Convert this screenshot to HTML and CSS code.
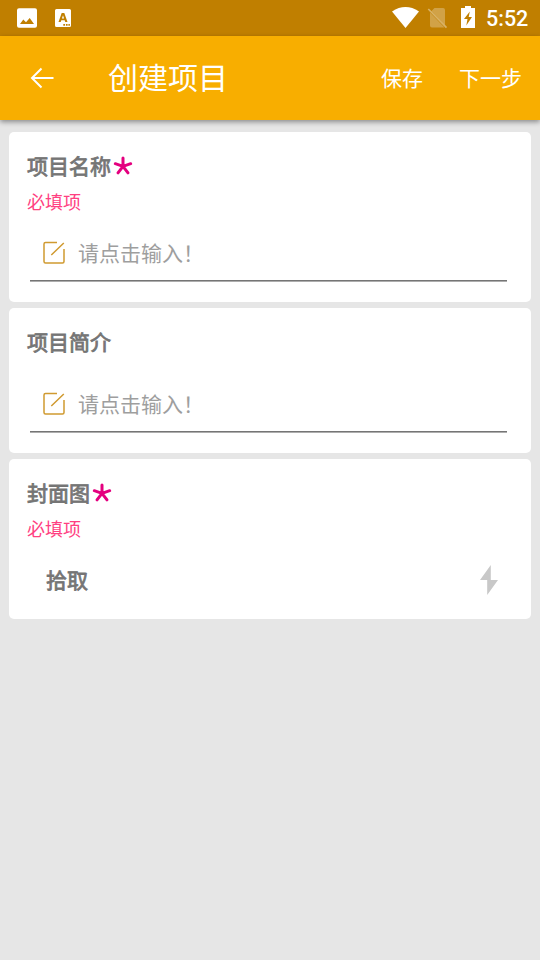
FILE: index.html
```html
<!DOCTYPE html>
<html lang="zh-CN">
<head>
<meta charset="utf-8">
<title>创建项目</title>
<link rel="stylesheet" href="styles.css">
</head>
<body>
<div class="status">
  <svg class="status-icons" width="120" height="36" viewBox="0 0 120 36">
    <path fill="#fff" fill-rule="evenodd" d="M19 8.300h16q2 0 2 2v15.400q0 2-2 2h-16q-2 0-2-2v-15.400q0-2 2-2zM20 24h14l-4.300-6-3.700 4.300-2.700-2.800z"/>
    <path fill="#fff" fill-rule="evenodd" d="M56.500 9h13q1.500 0 1.500 1.500v15q0 1.500-1.500 1.500h-13q-1.500 0-1.500-1.500v-15q0-1.500 1.500-1.500zM61.700 13l-3.200 9h2.200l.6-1.800h3.400l.6 1.800h2.200l-3.200-9zM63 15.200l1.100 3.400h-2.200zM63.300 24v1.700h1.700v-1.700zM65.900 24v1.700h1.700v-1.700zM68.400 24v1.700h1.500v-1.700z"/>
  </svg>
  <svg class="status-signals" width="96" height="36" viewBox="384 0 96 36">
    <path fill="#fff" d="M392 11.500Q405.500 2.700 419 11.500L405.500 28z"/>
    <path fill="#fff" fill-opacity=".28" d="M434.500 8H443q2 0 2 2v15L431.500 11zM430 12.500L444.500 27.500H432q-2 0-2-2z"/>
    <path stroke="#fff" stroke-opacity=".4" stroke-width="1.700" d="M428.300 9L446.500 27.600"/>
    <path fill="#fff" fill-rule="evenodd" d="M465 6h6v2h4v20h-14v-20h4zM469.800 11.500l-5.800 7.500h3.500l-1.200 6.500 5.700-8.500h-3.300z"/>
  </svg>
  <span class="clock">5:52</span>
</div>
<header class="toolbar">
  <svg class="back" width="24" height="22" viewBox="0 0 24 22"><path d="M11.500 1.500L2 11l9.500 9.500M1.500 11H23.500" fill="none" stroke="#fff" stroke-width="2"/></svg>
  <h1>创建项目</h1>
  <span class="action save">保存</span>
  <span class="action">下一步</span>
</header>
<main>
  <section class="card name-card">
    <h2>项目名称<svg class="star" width="20" height="20" viewBox="0 0 20 20"><path d="M10 10.300V2M10 10.300L2.300 7.700M10 10.300L17.700 7.700M10 10.300L5 16.800M10 10.300L15 16.800"/></svg></h2>
    <p class="required">必填项</p>
    <div class="field">
      <svg class="edit" width="24" height="24" viewBox="0 0 24 24"><path d="M15 1.600H3.500q-1.500 0-1.500 1.500V20.500q0 1.500 1.500 1.500H20.500q1.500 0 1.500-1.500V8M9.300 14L21.800 2"/></svg>
      <span>请点击输入！</span>
    </div>
  </section>
  <section class="card intro-card">
    <h2>项目简介</h2>
    <div class="field">
      <svg class="edit" width="24" height="24" viewBox="0 0 24 24"><path d="M15 1.600H3.500q-1.500 0-1.500 1.500V20.500q0 1.500 1.500 1.500H20.500q1.500 0 1.500-1.500V8M9.300 14L21.800 2"/></svg>
      <span>请点击输入！</span>
    </div>
  </section>
  <section class="card cover-card">
    <h2>封面图<svg class="star" width="20" height="20" viewBox="0 0 20 20"><path d="M10 10.300V2M10 10.300L2.300 7.700M10 10.300L17.700 7.700M10 10.300L5 16.800M10 10.300L15 16.800"/></svg></h2>
    <p class="required">必填项</p>
    <div class="pick">
      <span>拾取</span>
      <svg width="18" height="30" viewBox="0 0 18 30"><path fill="#c8c8c8" d="M10.800 0V15H18L7.200 30V15H0z"/></svg>
    </div>
  </section>
</main>
</body>
</html>
```
FILE: styles.css
```css
* {
  box-sizing: border-box;
}

body {
  margin: 0;
  height: 960px;
  background: #e6e6e6;
  font-family: "Noto Sans CJK SC", sans-serif;
  font-size: 21px;
  overflow: hidden;
}

svg {
  display: block;
  flex: none;
}

.status {
  height: 36px;
  display: flex;
  background: #c07f00;
}

.status-signals {
  margin-left: auto;
}

.clock {
  width: 60px;
  padding-left: 6px;
  color: #fff;
  font: 500 21.5px/38px Roboto, sans-serif;
}

.toolbar {
  height: 84px;
  display: flex;
  align-items: flex-start;
  padding: 0 18px 0 30px;
  background: #f8ae00;
  color: #fff;
  box-shadow: 0 2px 5px rgba(0, 0, 0, .4);
}

.back {
  margin-top: 30.5px;
}

h1 {
  margin: 0 auto 0 54px;
  font-size: 30px;
  font-weight: 400;
  line-height: 80px;
}

.action {
  line-height: 82px;
}

.save {
  margin-right: 36px;
}

main {
  display: flex;
  flex-direction: column;
  gap: 6px;
  padding: 12px 9px;
}

.card {
  padding: 17px 24px 0 18px;
  border-radius: 5px;
  background: #fff;
}

.name-card {
  height: 170px;
}

.intro-card {
  height: 145px;
}

.cover-card {
  height: 160px;
}

h2 {
  margin: 0;
  height: 32px;
  display: flex;
  font-size: 21px;
  font-weight: 400;
  line-height: 32px;
  color: #757575;
  -webkit-text-stroke: .8px #757575;
}

.star {
  margin: 7px 0 0 2px;
  fill: none;
  stroke: #e4007f;
  stroke-width: 3;
  stroke-linecap: round;
}

.required {
  margin: 6px 0 0;
  font-size: 18px;
  line-height: 28px;
  color: #ff4081;
}

.field {
  height: 58px;
  display: flex;
  align-items: center;
  margin: 9px 0 0 3px;
  padding: 0 0 3px 12px;
  background: linear-gradient(#757575 1px, #adadad 1px) bottom / 100% 2px no-repeat;
  color: #9e9e9e;
}

.intro-card .field {
  margin-top: 18px;
}

.field span {
  margin-left: 12px;
  line-height: 32px;
}

.edit {
  margin-top: 3px;
  fill: none;
  stroke: #d09a30;
  stroke-width: 1.500;
}

.pick {
  display: flex;
  justify-content: space-between;
  align-items: center;
  margin-top: 21px;
  padding: 0 9px 0 19px;
  color: #757575;
  -webkit-text-stroke: .8px #757575;
}

.pick svg {
  margin-top: 2px;
}
```
